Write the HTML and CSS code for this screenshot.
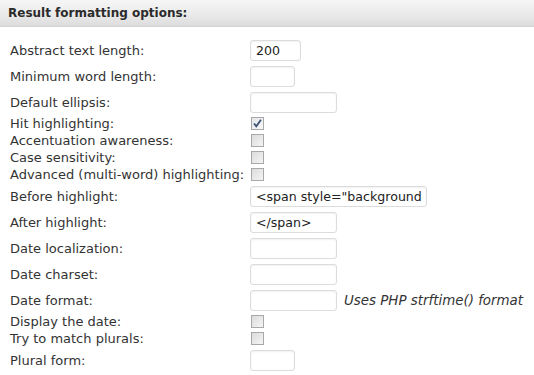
FILE: index.html
```html
<!DOCTYPE html>
<html lang="en">
  <head>
    <meta charset="UTF-8" />
    <title>Result formatting options</title>
    <link rel="stylesheet" href="styles.css">
  </head>
  <body>
    <div class="panel-head">Result formatting options:</div>

    <div class="options">
      <div class="row">
        <label class="label">Abstract text length:</label>
        <input class="field w-51" type="text" value="200" />
      </div>
      <div class="row">
        <label class="label">Minimum word length:</label>
        <input class="field w-45" type="text" value="" />
      </div>
      <div class="row">
        <label class="label">Default ellipsis:</label>
        <input class="field w-87" type="text" value="" />
      </div>

      <div class="row check-row">
        <label class="label">Hit highlighting:</label>
        <span class="check checked">
          <svg width="11" height="11" viewBox="0 0 11 11">
            <path d="M2 5.5 L4.3 8.3 L9 1.8" fill="none" stroke="#3d4f73" stroke-width="1.8" />
          </svg>
        </span>
      </div>
      <div class="row check-row">
        <label class="label">Accentuation awareness:</label>
        <span class="check"></span>
      </div>
      <div class="row check-row">
        <label class="label">Case sensitivity:</label>
        <span class="check"></span>
      </div>
      <div class="row check-row">
        <label class="label">Advanced (multi-word) highlighting:</label>
        <span class="check"></span>
      </div>

      <div class="row">
        <label class="label">Before highlight:</label>
        <input class="field w-177" type="text" value='<span style="background-color: #ffff00">' />
      </div>
      <div class="row">
        <label class="label">After highlight:</label>
        <input class="field w-87" type="text" value="</span>" />
      </div>
      <div class="row">
        <label class="label">Date localization:</label>
        <input class="field w-87" type="text" value="" />
      </div>
      <div class="row">
        <label class="label">Date charset:</label>
        <input class="field w-87" type="text" value="" />
      </div>
      <div class="row">
        <label class="label">Date format:</label>
        <div class="with-hint">
          <input class="field w-87" type="text" value="" />
          <em class="hint">Uses PHP strftime() format</em>
        </div>
      </div>

      <div class="row check-row">
        <label class="label">Display the date:</label>
        <span class="check"></span>
      </div>
      <div class="row check-row">
        <label class="label">Try to match plurals:</label>
        <span class="check"></span>
      </div>

      <div class="row">
        <label class="label">Plural form:</label>
        <input class="field w-45" type="text" value="" />
      </div>
    </div>
  </body>
</html>
```

FILE: styles.css
```css
body {
  margin: 0;
  padding: 0;
  background-color: #fff;
  font-family: "DejaVu Sans", Verdana, sans-serif;
  font-size: 13px;
  color: #333;
}
.panel-head {
  height: 26px;
  line-height: 26px;
  padding-left: 8px;
  font-weight: bold;
  font-size: 12px;
  color: #2b2b2b;
  background: linear-gradient(to bottom, #f6f6f6 0%, #e9e9e9 60%, #dcdcdc 100%);
  border-bottom: 1px solid #d4d4d4;
}
.options {
  padding: 10px 0 0 10px;
}
.row {
  display: grid;
  grid-template-columns: 240px auto;
  align-items: center;
  height: 26px;
}
.check-row {
  height: 17px;
}
.label {
  white-space: nowrap;
}
.field {
  box-sizing: border-box;
  height: 21px;
  margin: 0;
  padding: 0 4px 0 5px;
  border: 1px solid #dcdcdc;
  border-radius: 3px;
  box-shadow: inset 0 1px 2px rgba(0, 0, 0, 0.06);
  font-family: "DejaVu Sans", Verdana, sans-serif;
  font-size: 12.6px;
  color: #222;
  background-color: #fff;
  outline: none;
}
.w-45 { width: 45px; }
.w-51 { width: 51px; }
.w-87 { width: 87px; }
.w-177 { width: 177px; }
.check {
  box-sizing: border-box;
  width: 13px;
  height: 13px;
  margin-left: 1px;
  border: 1px solid #a8a8a8;
  background: linear-gradient(to bottom right, #dcdcdc, #f4f4f4);
  display: flex;
  justify-content: center;
  align-items: center;
}
.check.checked {
  background: linear-gradient(to bottom right, #e4e6ea, #f8f8f8);
}
.with-hint {
  display: flex;
  align-items: center;
  gap: 7px;
}
.hint {
  font-style: italic;
  font-size: 13.4px;
  color: #333;
}
```
